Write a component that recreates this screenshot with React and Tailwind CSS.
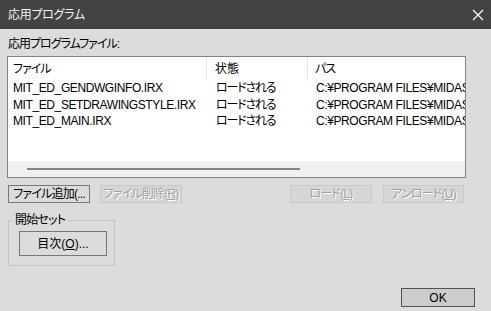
import React from 'react';

const rows = [
  { name: 'MIT_ED_GENDWGINFO.IRX', state: 'ロードされる', path: 'C:¥PROGRAM FILES¥MIDAS¥MIT_ED_GENDWGINFO.IRX' },
  { name: 'MIT_ED_SETDRAWINGSTYLE.IRX', state: 'ロードされる', path: 'C:¥PROGRAM FILES¥MIDAS¥MIT_ED_SETDRAWINGSTYLE.IRX' },
  { name: 'MIT_ED_MAIN.IRX', state: 'ロードされる', path: 'C:¥PROGRAM FILES¥MIDAS¥MIT_ED_MAIN.IRX' },
];

// classic dialog buttons
function Btn({ children, disabled, className = '' }) {
  if (disabled) {
    return (
      <div className={`h-[18px] flex items-center justify-center whitespace-nowrap border border-[#cacaca] bg-[#d6d6d6] text-[#a2a2a2] [text-shadow:1px_1px_0_#ffffff] ${className}`}>
        {children}
      </div>
    );
  }
  return (
    <div className={`flex items-center justify-center whitespace-nowrap border border-[#787878] bg-[#dcdcdc] text-black ${className}`}>
      {children}
    </div>
  );
}

export default function App() {
  return (
    <div className="w-[491px] h-[311px] bg-[#dcdcdc] flex flex-col overflow-hidden text-[12px] leading-[16px] [font-family:'Liberation_Sans','Noto_Sans_CJK_JP',sans-serif] [font-feature-settings:'palt']">
      {/* title bar */}
      <div className="h-[29px] shrink-0 bg-[#434343] flex items-center justify-between pl-[8px] pr-[6px] text-[#f2f2f2]">
        <span className="text-[12px] tracking-[-0.3px]">応用プログラム</span>
        <svg width="12" height="12" viewBox="0 0 12 12" className="mr-[1px]">
          <path d="M1 1 L11 11 M11 1 L1 11" stroke="#ffffff" strokeWidth="1.2" />
        </svg>
      </div>

      <div className="flex-1 flex flex-col pl-[7px]">
        <div className="mt-[7px] pl-[1px] text-black tracking-[-1px]">応用プログラムファイル:</div>

        {/* list view */}
        <div className="mt-[4px] w-[459px] h-[122px] border border-[#828282] bg-white flex flex-col text-black">
          <div className="h-[23px] flex items-center">
            <div className="w-[199px] pl-[5px] h-full flex items-center border-r border-[#e5e5e5] tracking-[-1px]">ファイル</div>
            <div className="w-[101px] pl-[8px] h-full flex items-center border-r border-[#e5e5e5]">状態</div>
            <div className="flex-1 pl-[7px] h-full flex items-center tracking-[-1px]">パス</div>
          </div>
          {rows.map((r) => (
            <div key={r.name} className="h-[16.5px] flex items-center whitespace-nowrap">
              <div className="w-[199px] shrink-0 pl-[5px] overflow-hidden tracking-[-0.4px]">{r.name}</div>
              <div className="w-[101px] shrink-0 pl-[9px] overflow-hidden tracking-[-1.2px]">{r.state}</div>
              <div className="flex-1 min-w-0 pl-[8px] overflow-hidden tracking-[-0.4px]">{r.path}</div>
            </div>
          ))}
          <div className="flex-1" />
          <div className="h-[16px] bg-[#f0f0f0] flex items-center pl-[19px]">
            <div className="w-[273px] h-[2px] bg-[#858585]" />
          </div>
        </div>

        {/* buttons */}
        <div className="mt-[7px] flex pl-[1px] tracking-[-0.8px]">
          <Btn className="w-[82px] h-[18px]">ファイル追加(...</Btn>
          <Btn disabled className="ml-[10px] w-[82px]">ファイル削除(<u>R</u>)</Btn>
          <Btn disabled className="ml-[108px] w-[82px]">ロード(<u>L</u>)</Btn>
          <Btn disabled className="ml-[11px] w-[81px]">アンロード(<u>U</u>)</Btn>
        </div>

        {/* group box */}
        <fieldset className="mt-[9px] ml-[1px] w-[107px] border border-[#c4c4c4] pl-[10px] pb-[9px]">
          <legend className="ml-[-7px] px-[3px] text-black tracking-[-0.8px]">開始セット</legend>
          <Btn className="mt-[3px] w-[88px] h-[25px]">目次(<u>O</u>)...</Btn>
        </fieldset>

        <div className="flex-1" />
        <div className="flex justify-end pr-[16px] pb-[4px]">
          <div className="w-[74px] h-[19px] flex items-center justify-center border border-[#505050] bg-[#cccccc] text-black">OK</div>
        </div>
      </div>
    </div>
  );
}
